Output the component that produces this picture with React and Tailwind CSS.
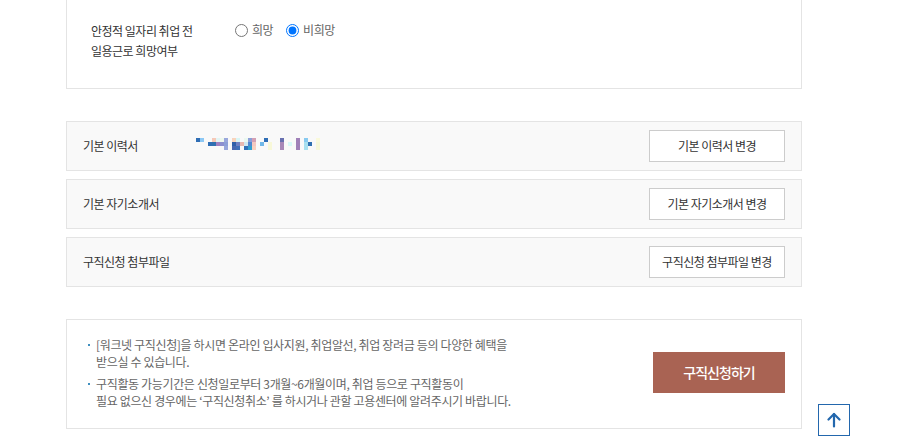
import React from "react";

const F = { fontFamily: "'Noto Sans CJK KR', 'Noto Sans', sans-serif" };

const mosaic = [
  [0, 0, "#2f6eb5"], [0, 4, "#8cc8f5"], [0, 16, "#f6c9b8"], [0, 20, "#e2f5f5"], [0, 24, "#eef8ee"], [0, 28, "#9aa8dc"],
  [0, 36, "#f8d4bc"], [0, 40, "#d8f6f6"], [0, 48, "#eaf8f0"], [0, 52, "#8c9ed8"], [0, 56, "#d4a0b4"], [0, 68, "#2f6eb5"],
  [0, 84, "#6870b0"], [0, 100, "#a080b8"], [0, 108, "#88caf0"], [0, 120, "#fafadc"],
  [1, 12, "#2f6eb5"], [1, 16, "#3070b0"], [1, 20, "#a080c0"], [1, 24, "#8c90d0"], [1, 28, "#8ca0d8"], [1, 36, "#3060a8"],
  [1, 40, "#7080c0"], [1, 44, "#e8b8b0"], [1, 48, "#d0e8f0"], [1, 52, "#5088d0"], [1, 56, "#f4c8c0"], [1, 64, "#70b8e8"],
  [1, 72, "#f8f8d8"], [1, 84, "#a888b8"], [1, 92, "#d8f8f8"], [1, 100, "#a080b8"], [1, 108, "#a8e0f0"], [1, 112, "#3070b0"],
  [1, 120, "#f8f8d8"],
  [2, 28, "#98a8dc"], [2, 36, "#4868b0"], [2, 40, "#4070b8"], [2, 48, "#3070b8"], [2, 52, "#30a0d0"], [2, 56, "#f8d0c0"],
  [2, 72, "#f8f8d8"], [2, 84, "#a888b8"], [2, 100, "#a080b8"], [2, 108, "#a8e0f0"], [2, 120, "#f8f8d8"],
];

function Mosaic() {
  return (
    <svg width="124" height="12" viewBox="0 0 124 12" className="mb-[5px]">
      {mosaic.map(([r, x, c], i) => (
        <rect key={i} x={x} y={r * 4} width="4" height="4" fill={c} />
      ))}
    </svg>
  );
}

function Row({ label, btn, children }) {
  return (
    <div className="flex h-[50px] items-center border border-[#e4e4e4] bg-[#f9f9f9] pl-[16px] pr-[16px]">
      <div className="w-[113px] shrink-0 text-[12px] leading-[18px] tracking-[-0.5px] text-[#333]">{label}</div>
      <div className="flex flex-1 items-center">{children}</div>
      <button className="h-[32px] w-[136px] border border-[#cccccc] bg-white text-[12px] tracking-[-0.5px] text-[#333]">
        {btn}
      </button>
    </div>
  );
}

export default function App() {
  return (
    <div className="relative h-[441px] w-[923px] overflow-hidden bg-white" style={F}>
      <div className="ml-[66px] w-[736px]">
        <div className="flex border border-t-0 border-[#e4e4e4] pb-[27px] pl-[24px] pt-[21px]">
          <div className="w-[144px] text-[12px] leading-[20px] tracking-[-0.5px] text-[#333]">
            안정적 일자리 취업 전
            <br />
            일용근로 희망여부
          </div>
          <div className="flex h-[18px] items-center text-[12px] tracking-[-0.5px] text-[#666]">
            <label className="flex items-center">
              <input type="radio" name="hope" className="m-0 h-[13px] w-[13px]" />
              <span className="ml-[4px]">희망</span>
            </label>
            <label className="ml-[13px] flex items-center">
              <input type="radio" name="hope" defaultChecked className="m-0 h-[13px] w-[13px]" />
              <span className="ml-[4px]">비희망</span>
            </label>
          </div>
        </div>

        <div className="mt-[32px] flex flex-col gap-[8px]">
          <Row label="기본 이력서" btn="기본 이력서 변경">
            <Mosaic />
          </Row>
          <Row label="기본 자기소개서" btn="기본 자기소개서 변경" />
          <Row label="구직신청 첨부파일" btn="구직신청 첨부파일 변경" />
        </div>

        <div className="mt-[32px] flex items-center border border-[#e4e4e4] pb-[19px] pl-[21px] pr-[16px] pt-[16px]">
          <ul className="flex-1 text-[12px] leading-[17px] tracking-[-0.35px] text-[#666]">
            <li className="flex whitespace-nowrap">
              <span className="mt-[8px] mr-[6px] h-[2px] w-[2px] shrink-0 bg-[#3f8fbf]" />
              <span>
                [워크넷 구직신청]을 하시면 온라인 입사지원, 취업알선, 취업 장려금 등의 다양한 혜택을
                <br />
                받으실 수 있습니다.
              </span>
            </li>
            <li className="mt-[5px] flex whitespace-nowrap">
              <span className="mt-[8px] mr-[6px] h-[2px] w-[2px] shrink-0 bg-[#3f8fbf]" />
              <span>
                구직활동 가능기간은 신청일로부터 3개월~6개월이며, 취업 등으로 구직활동이
                <br />
                필요 없으신 경우에는 ‘구직신청취소’ 를 하시거나 관할 고용센터에 알려주시기 바랍니다.
              </span>
            </li>
          </ul>
          <button className="h-[41px] w-[132px] bg-[#a96353] text-[14px] font-medium tracking-[-1px] text-white">
            구직신청하기
          </button>
        </div>
      </div>

      <button className="absolute left-[818px] top-[404px] flex h-[32px] w-[32px] items-center justify-center border-[1.5px] border-[#2367ad] bg-white">
        <svg width="14" height="16" viewBox="0 0 14 16" fill="none" stroke="#2367ad" strokeWidth="2.2" strokeLinecap="round" strokeLinejoin="round">
          <path d="M7 14.5V2" />
          <path d="M1.5 7.5L7 2l5.5 5.5" />
        </svg>
      </button>
    </div>
  );
}
